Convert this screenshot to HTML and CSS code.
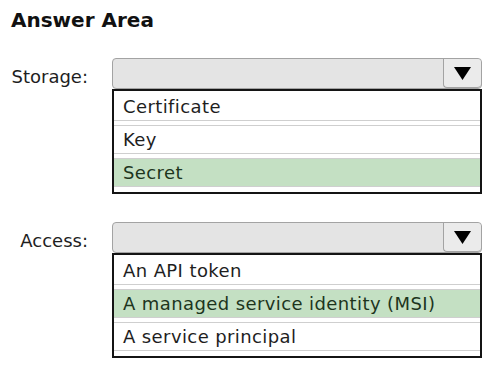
FILE: index.html
```html
<!DOCTYPE html>
<html lang="en">
<head>
    <meta charset="UTF-8">
    <meta name="viewport" content="width=device-width, initial-scale=1.0">
    <title>Answer Area</title>
    <link rel="stylesheet" href="styles.css">
</head>
<body>
    <h1 class="title">Answer Area</h1>

    <div class="field">
        <div class="field-label">Storage:</div>
        <div class="dropdown">
            <div class="select">
                <span class="select-value"></span>
                <span class="select-button">
                    <svg width="17" height="13" viewBox="0 0 17 13"><polygon points="0,0 17,0 8.5,13" fill="#000"/></svg>
                </span>
            </div>
            <ul class="options">
                <li class="option">Certificate</li>
                <li class="option">Key</li>
                <li class="option selected">Secret</li>
            </ul>
        </div>
    </div>

    <div class="field">
        <div class="field-label">Access:</div>
        <div class="dropdown">
            <div class="select">
                <span class="select-value"></span>
                <span class="select-button">
                    <svg width="17" height="13" viewBox="0 0 17 13"><polygon points="0,0 17,0 8.5,13" fill="#000"/></svg>
                </span>
            </div>
            <ul class="options">
                <li class="option">An API token</li>
                <li class="option selected">A managed service identity (MSI)</li>
                <li class="option">A service principal</li>
            </ul>
        </div>
    </div>
</body>
</html>
```

FILE: styles.css
```css
body {
    font-family: "DejaVu Sans", Verdana, sans-serif;
    margin: 0;
    padding: 0;
    background-color: #fff;
    color: #1e1e1e;
}
.title {
    font-size: 20px;
    font-weight: bold;
    line-height: 24px;
    margin: 8px 0 0 11px;
    color: #111;
}
.field {
    display: flex;
    align-items: flex-start;
    margin-top: 26px;
}
.field + .field {
    margin-top: 28px;
}
.field-label {
    width: 88px;
    text-align: right;
    font-size: 18px;
    line-height: 31px;
    padding-top: 3px;
    margin-right: 24px;
}
.dropdown {
    width: 370px;
}
.select {
    display: flex;
    height: 31px;
    box-sizing: border-box;
    border: 1px solid #a3a3a3;
    border-radius: 4px;
    background-color: #e4e4e4;
}
.select-value {
    flex: 1;
}
.select-button {
    width: 38px;
    height: 29px;
    box-sizing: border-box;
    border-left: 1px solid #a3a3a3;
    border-bottom: 1px solid #a3a3a3;
    border-radius: 0 4px 4px 4px;
    background-color: #ebebeb;
    display: flex;
    align-items: center;
    justify-content: center;
}
.options {
    list-style: none;
    margin: 0;
    padding: 0 0 5px;
    border: 2px solid #141414;
    background: #fff;
}
.option {
    font-size: 18px;
    line-height: 27px;
    letter-spacing: 0.4px;
    padding-left: 9px;
    border-top: 1px solid #cfcfcf;
    border-bottom: 1px solid #cfcfcf;
    margin-top: 4px;
}
.option:first-child {
    margin-top: 0;
    border-top: none;
    padding-top: 2px;
}
.option.selected {
    background-color: #c4e0c3;
    color: #1d351d;
}
```
